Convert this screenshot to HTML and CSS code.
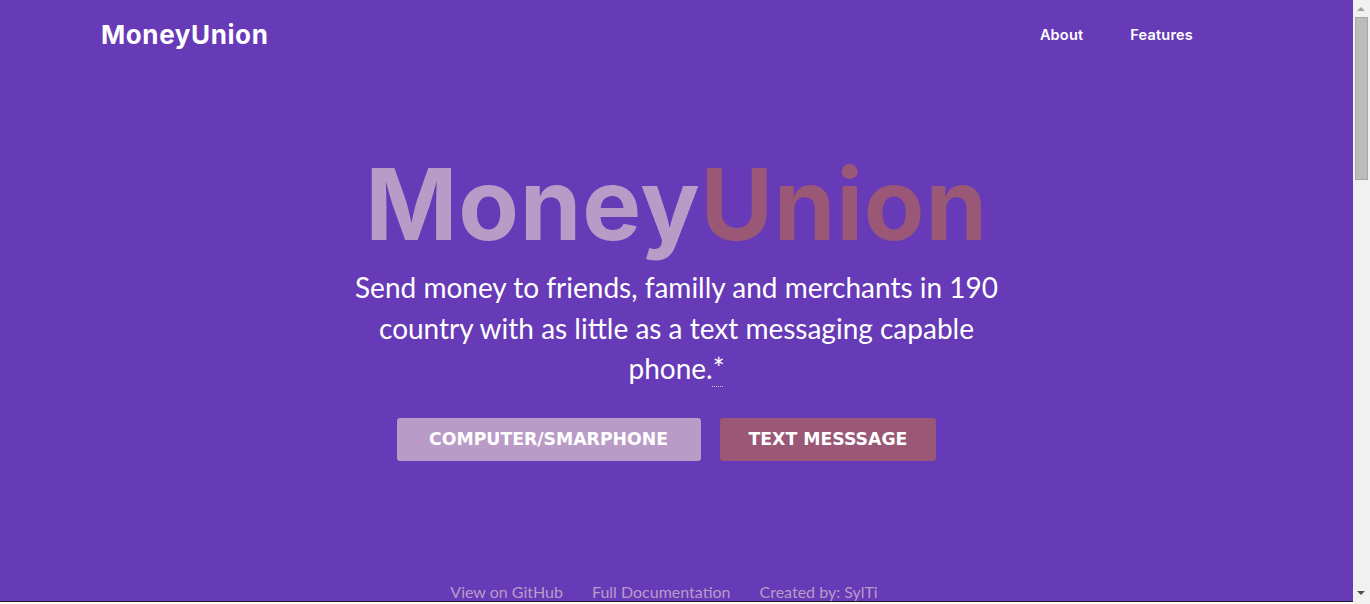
FILE: index.html
```html
<!DOCTYPE html>
<html lang="en">
<head>
<meta charset="utf-8">
<title>MoneyUnion</title>
<link rel="stylesheet" href="styles.css">
</head>
<body>
<section class="hero">
  <header class="topbar">
    <a class="brand" href="#">MoneyUnion</a>
    <nav class="nav">
      <a href="#about">About</a>
      <a href="#features">Features</a>
    </nav>
  </header>
  <div class="hero-body">
    <h1 class="title"><span class="t-light">Money</span><span class="t-dark">Union</span></h1>
    <p class="tagline">Send money to friends, familly and merchants in 190 country with as little as a text messaging capable phone.<abbr title="Conditions apply">*</abbr></p>
    <div class="actions">
      <a class="btn btn-light" href="#">COMPUTER/SMARPHONE</a>
      <a class="btn btn-dark" href="#">TEXT MESSSAGE</a>
    </div>
  </div>
  <footer class="hero-foot">
    <a href="#">View on GitHub</a>
    <a href="#">Full Documentation</a>
    <a href="#">Created by: SylTi</a>
  </footer>
</section>
<section class="below" id="about">
  <h2 class="below-title">About</h2>
</section>
<section class="below alt" id="features">
  <h2 class="below-title">Features</h2>
</section>
<div class="scrollbar" aria-hidden="true">
  <span class="sb-btn sb-up"></span>
  <span class="sb-thumb"></span>
  <span class="sb-track"></span>
  <span class="sb-btn sb-down"></span>
</div>
</body>
</html>
```
FILE: styles.css
```css
body{margin:0 17px 0 0;font-family:Lato,"Open Sans",sans-serif;background:#fff;color:#222}
a{text-decoration:none}

.hero{background:#673ab7;height:601px;display:flex;flex-direction:column;border-bottom:1px solid #1d1d1d}
.topbar{display:flex;justify-content:space-between;align-items:center;height:68px;padding:0 160px 0 101px}
.brand{font-family:Inter,sans-serif;font-weight:700;font-size:26px;letter-spacing:0.6px;color:#fff}
.nav{display:flex;gap:47px}
.nav a{font-family:Inter,sans-serif;font-weight:600;font-size:14.5px;letter-spacing:0.2px;color:#fff}

.hero-body{flex:1;display:flex;flex-direction:column;align-items:center;padding-top:87px}
.title{margin:0;font-family:Inter,sans-serif;font-weight:700;font-size:99px;line-height:99px;letter-spacing:0.8px}
.t-light{color:#ba9bc8}
.t-dark{color:#9a5776}
.tagline{margin:13px 0 0;max-width:660px;text-align:center;color:#fff;font-size:28px;line-height:40.5px}
.tagline abbr{text-decoration:underline dotted #c8c8c8;text-decoration-thickness:1px;text-underline-offset:7px}
.actions{display:flex;gap:19px;margin-top:29px;margin-right:20px}
.btn{display:flex;align-items:center;height:43px;border-radius:3px;color:#fff;font-family:"DejaVu Sans",sans-serif;font-weight:700;font-size:17.3px}
.btn-light{background:#ba9bc8;padding:0 32.5px}
.btn-dark{background:#9a5776;padding:0 29px}

.hero-foot{display:flex;justify-content:center;gap:29px;padding-right:25px;height:19px;align-items:flex-start}
.hero-foot a{color:#ba9bc8;font-size:16px;line-height:20px}

.below{height:760px;background:#fff;padding:60px 101px;box-sizing:border-box}
.below.alt{background:#f3f3f3}
.below-title{margin:0;font-family:Inter,sans-serif;font-size:32px;color:#673ab7}

.scrollbar{position:fixed;top:0;right:0;width:17px;height:100vh;background:#f1f1f1;display:flex;flex-direction:column;align-items:center}
.sb-btn{height:17px;width:17px;flex:none;position:relative}
.sb-btn::after{content:"";position:absolute;left:4px;border-left:4px solid transparent;border-right:4px solid transparent}
.sb-up::after{top:7px;border-bottom:4px solid #a3a3a3}
.sb-down::after{top:4px;border-top:4px solid #505050}
.sb-thumb{width:11px;height:161px;background:#bcbcbc;border:1px solid #a6a6a6;flex:none}
.sb-track{flex:1}
```
